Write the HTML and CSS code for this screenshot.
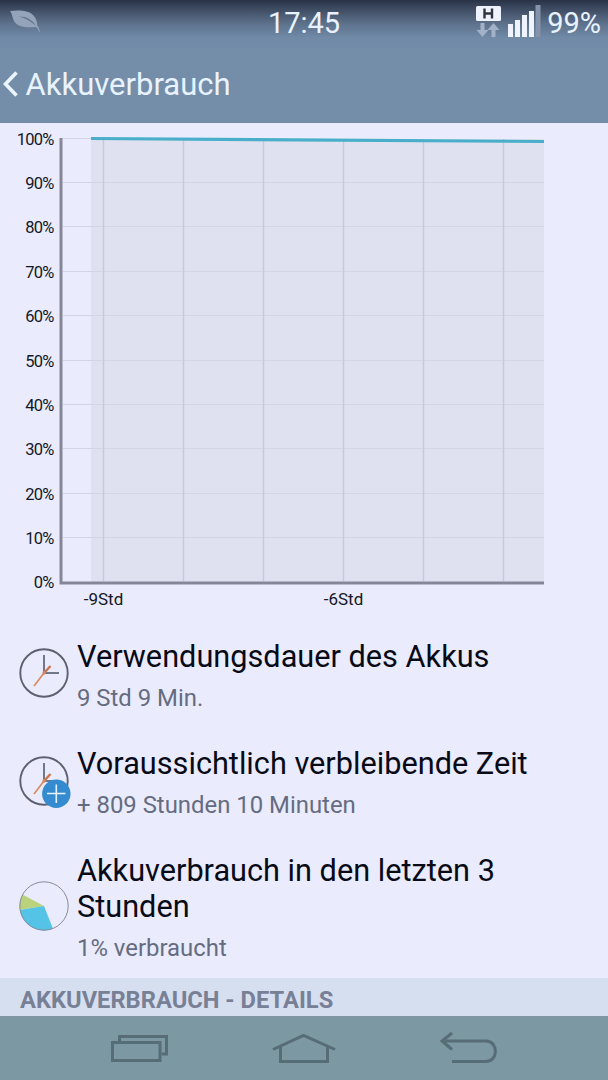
FILE: index.html
```html
<!DOCTYPE html>
<html lang="de">
<head>
<meta charset="utf-8">
<title>Akkuverbrauch</title>
<link rel="stylesheet" href="styles.css">
</head>
<body>
<header class="top">
  <div class="status">
    <svg class="leaf" width="32" height="26" viewBox="0 0 32 26"><path d="M0 1C8 0 18 0 23 5C27 9 27 13 27.500 16C29 18 30 20 29.500 23C28.500 20 27.500 18 26 17C16 18 7 17 4 11C2 7 2 3 0 1Z" fill="#94a3b9"/><path d="M8 6.500C15 6 22 9 26 16C20 10.500 15 8 8 6.500Z" fill="#62748d"/></svg>
    <span class="time">17:45</span>
    <div class="indicators">
      <svg width="66" height="34" viewBox="0 0 66 34">
        <rect x="1" y="2" width="25" height="15" rx="1.500" fill="#eef2fd"/>
        <path d="M9.500 4.500V14.500M17 4.500V14.500M9.500 9.500H17" stroke="#303440" stroke-width="2.400"/>
        <path d="M5.500 19H9.500V26H13.500L7.500 33L1.500 26H5.500ZM16.500 33H20.500V26H24.500L18.500 19L12.500 26H16.500Z" fill="#a2b1c8"/>
        <path d="M33 20H38V33H33ZM40 16H45V33H40ZM47 11H52V33H47ZM54 7H59V33H54Z" fill="#eef3fe"/>
        <path d="M60.500 1H65.500V33H60.500Z" fill="#8593aa"/>
      </svg>
      <span class="percent">99%</span>
    </div>
  </div>
  <div class="title-bar">
    <svg width="18" height="26" viewBox="0 0 18 26"><path d="M16.500 1.500L5.500 13L16.500 24.500" fill="none" stroke="#eaf4ff" stroke-width="3.600"/></svg>
    <h1 class="title">Akkuverbrauch</h1>
  </div>
</header>
<main class="content">
  <svg class="chart" width="608" height="492" viewBox="0 123 608 492">
    <rect x="91" y="139" width="453" height="443" fill="#dfe0f0"/>
    <path class="grid-h" d="M63 138.500H91M63 182.500H544M63 226.500H544M63 271.500H544M63 315.500H544M63 360.500H544M63 404.500H544M63 448.500H544M63 493.500H544M63 537.500H544"/>
    <path class="grid-v" d="M103.500 139V581M183.500 139V581M263.500 139V581M343.500 139V581M423.500 139V581M503.500 139V581"/>
    <path d="M61 138V583H544" fill="none" stroke="#858799" stroke-width="3"/>
    <path d="M91 138.500L544 141.500" stroke="#48aeca" stroke-width="3.200"/>
    <g class="axis axis-y">
      <text x="53.500" y="145">100%</text><text x="53.500" y="189">90%</text><text x="53.500" y="233">80%</text><text x="53.500" y="278">70%</text><text x="53.500" y="322">60%</text><text x="53.500" y="367">50%</text><text x="53.500" y="411">40%</text><text x="53.500" y="455">30%</text><text x="53.500" y="500">20%</text><text x="53.500" y="544">10%</text><text x="53.500" y="588">0%</text>
    </g>
    <g class="axis axis-x"><text x="103.500" y="605">-9Std</text><text x="343.500" y="605">-6Std</text></g>
  </svg>
  <section class="item">
    <svg class="icon" width="54" height="54" viewBox="0 0 54 54">
      <circle cx="25" cy="25" r="23.700" fill="none" stroke="#5c6070" stroke-width="1.900"/>
      <path d="M25 7V25H40" fill="none" stroke="#70788a" stroke-width="2"/>
      <path d="M15 38L25 25" stroke="#d9885e" stroke-width="1.600"/><path d="M25 25L31.500 18" stroke="#cc744c" stroke-width="2.400"/><circle cx="25" cy="25" r="1.700" fill="#d48a66"/>
    </svg>
    <div class="item-text"><h2 class="item-title">Verwendungsdauer des Akkus</h2><p class="item-sub">9 Std 9 Min.</p></div>
  </section>
  <section class="item">
    <svg class="icon" width="54" height="54" viewBox="0 0 54 54">
      <circle cx="25" cy="25" r="23.700" fill="none" stroke="#5c6070" stroke-width="1.900"/>
      <path d="M25 7V25H40" fill="none" stroke="#70788a" stroke-width="2"/>
      <path d="M15 38L25 25" stroke="#d9885e" stroke-width="1.600"/><path d="M25 25L31.500 18" stroke="#cc744c" stroke-width="2.400"/><circle cx="25" cy="25" r="1.700" fill="#d48a66"/>
      <circle cx="37.300" cy="37.700" r="14.200" fill="#348bcf"/><path d="M28 37.500H46.500M37.300 28.500V47" stroke="#e6f4ff" stroke-width="1.600"/>
    </svg>
    <div class="item-text"><h2 class="item-title">Voraussichtlich verbleibende Zeit</h2><p class="item-sub">+ 809 Stunden 10 Minuten</p></div>
  </section>
  <section class="item item-tall">
    <svg class="icon" width="54" height="54" viewBox="0 0 54 54">
      <path d="M25 25L3.500 13.500A24.500 24.500 0 0 0 .8 29Z" fill="#b9d27b"/>
      <path d="M25 25L.8 29A24.500 24.500 0 0 0 34 47.800Z" fill="#55c3e6"/>
      <circle cx="25" cy="25" r="24.200" fill="none" stroke="#898b99" stroke-width="1"/>
    </svg>
    <div class="item-text"><h2 class="item-title">Akkuverbrauch in den letzten 3<br>Stunden</h2><p class="item-sub">1% verbraucht</p></div>
  </section>
  <h3 class="section"><span>AKKUVERBRAUCH - DETAILS</span></h3>
</main>
<nav class="nav">
  <svg width="608" height="64" viewBox="0 1016 608 64" fill="none" stroke="#566d76" stroke-width="3">
    <path d="M119.500 1041V1036.500H166.500V1054H161.500"/><rect x="112.500" y="1042.500" width="47.500" height="18"/>
    <path d="M273 1049.500L303.500 1035.500L335 1049.500M280.500 1047V1061.500H327.500V1047"/>
    <path d="M452 1033L442 1041L452 1049.500M442 1041H486C498.500 1041 498.500 1061.500 486 1061.500H452"/>
  </svg>
</nav>
</body>
</html>
```
FILE: styles.css
```css
* { box-sizing: border-box; margin: 0; padding: 0; }
body { width: 608px; height: 1080px; overflow: hidden; display: flex; flex-direction: column; background: #eaebfd; font-family: Roboto, "Liberation Sans", sans-serif; color: #080a16; }
svg { display: block; flex: none; }
.top { height: 123px; background: linear-gradient(#293245 0, #3c495f 8px, #5c708a 23px, #708aa7 38px, #748da9 50px, #748da9 100%); color: #e8f3ff; }
.status { height: 44px; display: grid; grid-template-columns: 1fr auto 1fr; align-items: center; }
.leaf { margin: 1px 0 0 10px; }
.time { font-size: 29px; line-height: 44px; padding-top: 1px; }
.indicators { display: flex; justify-content: flex-end; align-items: center; gap: 6px; padding-right: 7px; }
.indicators svg { margin-top: -3px; }
.percent { font-size: 29px; line-height: 44px; }
.title-bar { height: 79px; padding-top: 1px; display: flex; align-items: center; gap: 7.5px; }
.title { font-size: 31px; font-weight: 400; }
.content { flex: 1; display: flex; flex-direction: column; }
.grid-h { stroke: #d3d4e6; stroke-width: 1; }
.grid-v { stroke: #c7c8da; stroke-width: 1.4; }
.axis { font-size: 16.5px; fill: #151826; }
.axis-y { text-anchor: end; letter-spacing: -0.8px; }
.axis-x { text-anchor: middle; font-size: 17px; }
.item { display: flex; align-items: center; height: 107.5px; padding: 9px 0 0 19px; gap: 4px; }
.icon { margin-top: 4px; }
.item-text { padding-top: 5px; }
.item-title { font-size: 30.7px; line-height: 36px; font-weight: 400; white-space: nowrap; }
.item-sub { font-size: 23.9px; line-height: 30px; margin-top: 8px; color: #656c80; white-space: nowrap; }
.item-tall { height: 148px; padding-top: 3px; }
.item-tall .item-text { padding-top: 4px; }
.section { height: 38px; padding: 5px 0 0 20px; display: flex; align-items: center; background: #d6dff0; color: #788095; font-size: 23.7px; font-weight: 700; }
.nav { height: 64px; background: #7c98a3; border-top: 1px solid #8194a2; }
.nav svg { margin-top: -1px; }
```
